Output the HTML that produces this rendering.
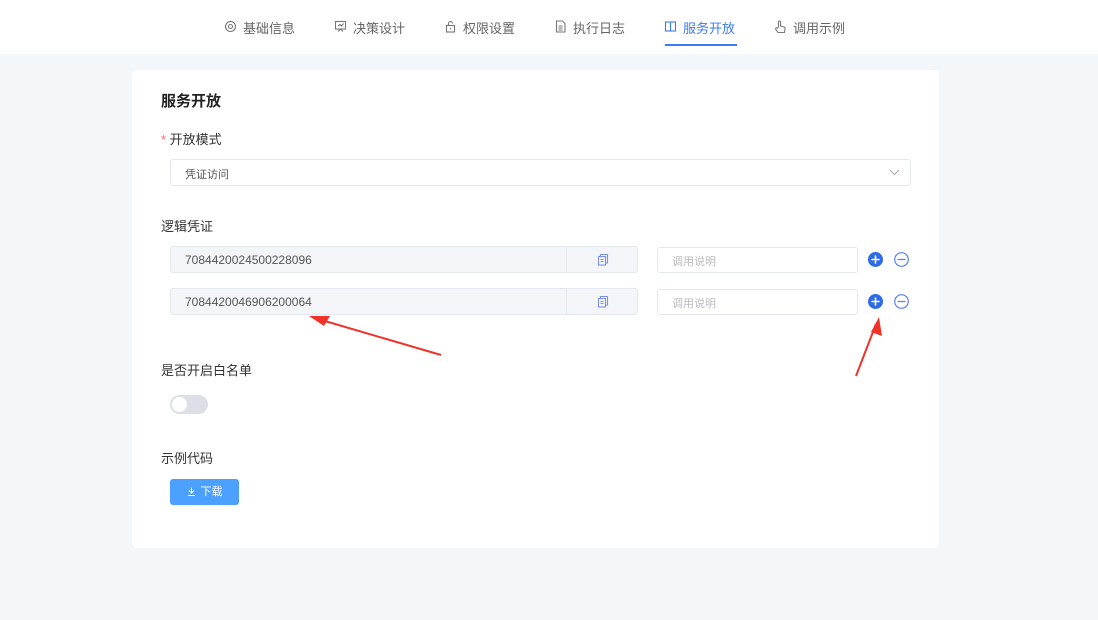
<!DOCTYPE html>
<html><head><meta charset="utf-8"><style>
*{box-sizing:border-box;margin:0;padding:0}
body{width:1098px;height:620px;background:#f4f7f9;font-family:"Liberation Sans","Noto Sans CJK SC",sans-serif;position:relative;overflow:hidden;color:#333}
.top{position:absolute;left:0;top:0;width:1098px;height:54px;background:#fff}
.tab{position:absolute;top:18px;font-size:13px;color:#666;white-space:nowrap}
.tab.act{color:#3d7bf0}
.ic{position:absolute;top:20px}
.ul{position:absolute;left:665px;top:44px;width:72px;height:2px;background:#3d7bf0}
.card{position:absolute;left:132px;top:70px;width:807px;height:478px;background:#fff;border-radius:6px}
.a{position:absolute;white-space:nowrap}
.inp{position:absolute;border:1px solid #e4e7ed;border-radius:3px;background:#fff}
.dis{background:#f3f5f8}
</style></head><body>
<div class="top">
<svg class="ic" style="left:224px" width="13" height="13" viewBox="0 0 13 13" fill="none" stroke="#777" stroke-width="1.1"><circle cx="6.5" cy="6.5" r="5"/><circle cx="6.5" cy="6.5" r="2"/></svg>
<div class="tab" style="left:243px">基础信息</div>
<svg class="ic" style="left:334px" width="13" height="13" viewBox="0 0 13 13" fill="none" stroke="#777" stroke-width="1.1"><rect x="1.5" y="1.5" width="10" height="7.5"/><path d="M4 11.5L6.5 9 9 11.5M4 6L6 4.5 7.5 6 9.5 3.5"/></svg>
<div class="tab" style="left:353px">决策设计</div>
<svg class="ic" style="left:444px" width="13" height="13" viewBox="0 0 13 13" fill="none" stroke="#777" stroke-width="1.1"><rect x="2.5" y="5.5" width="8" height="6.5"/><path d="M4.5 5.5V3.5a2 2 0 0 1 4 0"/><path d="M6.5 8v1.5"/></svg>
<div class="tab" style="left:463px">权限设置</div>
<svg class="ic" style="left:554px" width="13" height="13" viewBox="0 0 13 13" fill="none" stroke="#777" stroke-width="1.1"><path d="M2.5 1h6l2.5 2.5V12h-8.5z"/><path d="M4.5 6h4M4.5 8h4M4.5 10h4"/></svg>
<div class="tab" style="left:573px">执行日志</div>
<svg class="ic" style="left:664px" width="13" height="13" viewBox="0 0 13 13" fill="none" stroke="#3d7bf0" stroke-width="1.1"><rect x="1.5" y="2" width="10" height="9"/><path d="M6.5 2v9"/></svg>
<div class="tab act" style="left:683px">服务开放</div>
<svg class="ic" style="left:774px" width="13" height="14" viewBox="0 0 13 14" fill="none" stroke="#777" stroke-width="1.1"><path d="M4.5 7V2a1 1 0 0 1 2 0v4l3.5 1a1.5 1.5 0 0 1 1 1.7L10.5 12.5H4L1.8 9.3a1 1 0 0 1 1.5-1.3z"/></svg>
<div class="tab" style="left:793px">调用示例</div>
<div class="ul"></div>
</div>
<div class="card"></div>
<div class="a" style="left:161px;top:90px;font-size:15px;font-weight:bold;color:#222">服务开放</div>
<div class="a" style="left:161px;top:129px;font-size:13px"><span style="color:#f56c6c">*</span> 开放模式</div>
<div class="inp" style="left:170px;top:159px;width:741px;height:27px"><span class="a" style="left:14px;top:6px;font-size:11px;color:#555">凭证访问</span><svg class="a" style="right:10px;top:9px" width="11" height="7" viewBox="0 0 11 7" fill="none" stroke="#aaa" stroke-width="1"><path d="M1 1l4.5 4.5L10 1"/></svg></div>
<div class="a" style="left:161px;top:216px;font-size:13px">逻辑凭证</div>
<div class="inp dis" style="left:170px;top:246px;width:468px;height:27px"><span class="a" style="left:14px;top:6px;font-size:12px;color:#555">7084420024500228096</span><div style="position:absolute;left:395px;top:0;width:1px;height:25px;background:#e4e7ed"></div><svg class="a" style="left:426px;top:6px" width="12" height="13" viewBox="0 0 12 13" fill="none" stroke="#7b93e8" stroke-width="1.1"><rect x="1.5" y="3.5" width="7" height="8.5"/><path d="M3.5 3.5V1.5h7v8.5h-2M3.5 6.5h3M3.5 8.5h3"/></svg></div>
<div class="inp dis" style="left:170px;top:288px;width:468px;height:27px"><span class="a" style="left:14px;top:6px;font-size:12px;color:#555">7084420046906200064</span><div style="position:absolute;left:395px;top:0;width:1px;height:25px;background:#e4e7ed"></div><svg class="a" style="left:426px;top:6px" width="12" height="13" viewBox="0 0 12 13" fill="none" stroke="#7b93e8" stroke-width="1.1"><rect x="1.5" y="3.5" width="7" height="8.5"/><path d="M3.5 3.5V1.5h7v8.5h-2M3.5 6.5h3M3.5 8.5h3"/></svg></div>
<div class="inp" style="left:657px;top:247px;width:201px;height:26px"><span class="a" style="left:14px;top:5px;font-size:11px;color:#bbb">调用说明</span></div>
<div class="inp" style="left:657px;top:289px;width:201px;height:26px"><span class="a" style="left:14px;top:5px;font-size:11px;color:#bbb">调用说明</span></div>
<svg style="position:absolute;left:0;top:0" width="1098" height="620">
<g stroke-width="1.6" stroke-linecap="round">
<circle cx="875.5" cy="259.5" r="7.5" fill="#2f6be8"/><path d="M872 259.5h7M875.5 256v7" stroke="#fff"/>
<circle cx="901.5" cy="259.5" r="6.8" fill="none" stroke="#5b82e8" stroke-width="1.2"/><path d="M898 259.5h7" stroke="#5b82e8" stroke-width="1.2"/>
<circle cx="875.5" cy="301.5" r="7.5" fill="#2f6be8"/><path d="M872 301.5h7M875.5 298v7" stroke="#fff"/>
<circle cx="901.5" cy="301.5" r="6.8" fill="none" stroke="#5b82e8" stroke-width="1.2"/><path d="M898 301.5h7" stroke="#5b82e8" stroke-width="1.2"/>
</g>
<path d="M441 355 L318 319" stroke="#f0322a" stroke-width="2" fill="none"/>
<path d="M309 316 L330 316 L324 326 Z" fill="#f0322a"/>
<path d="M856 376 L876 324" stroke="#f0322a" stroke-width="2" fill="none"/>
<path d="M879 317 L882 336 L871 332 Z" fill="#f0322a"/>
</svg>
<div class="a" style="left:161px;top:360px;font-size:13px">是否开启白名单</div>
<div class="a" style="left:170px;top:395px;width:38px;height:19px;border-radius:10px;background:#dcdfe6"><div style="position:absolute;left:2px;top:2px;width:15px;height:15px;border-radius:50%;background:#fff"></div></div>
<div class="a" style="left:161px;top:448px;font-size:13px">示例代码</div>
<div class="a" style="left:170px;top:479px;width:69px;height:26px;border-radius:3px;background:#4ca0ff;color:#fff;font-size:11px;line-height:26px;text-align:center"><svg style="vertical-align:-1px;margin-right:5px" width="9" height="9" viewBox="0 0 9 9" fill="none" stroke="#fff" stroke-width="1"><path d="M4.5 0.5v5M2 3.5l2.5 2.5L7 3.5M1 8.5h7"/></svg>下载</div>
</body></html>
